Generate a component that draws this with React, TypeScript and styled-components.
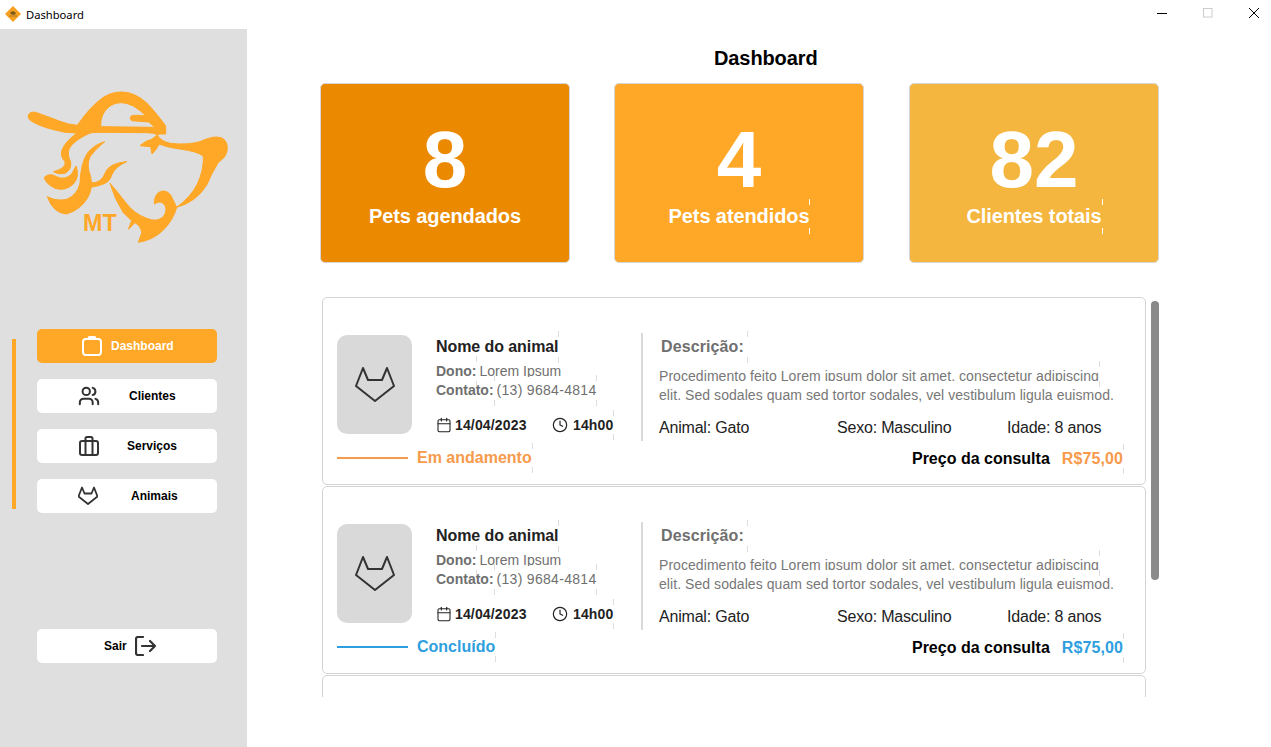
import React from "react";
import styled, { createGlobalStyle } from "styled-components";
import { Calendar, Clock, Users } from "lucide-react";

const ORANGE = "#ffa726";

const GlobalStyle = createGlobalStyle`
  html, body {
    margin: 0;
    height: 100%;
    overflow: hidden;
    background: #fff;
  }
  body {
    font-family: "Liberation Sans", Arial, sans-serif;
  }
  * {
    box-sizing: border-box;
  }
`;

const Window = styled.div`
  width: 1271px;
  height: 747px;
  display: flex;
  flex-direction: column;
  overflow: hidden;
`;

const TitleBar = styled.div`
  height: 29px;
  flex: none;
  display: flex;
  align-items: center;
  padding: 0 12px 1px 5px;
  background: #fff;
`;

const TitleText = styled.span`
  margin-left: 5px;
  font-family: "Noto Sans", sans-serif;
  font-size: 11.2px;
  color: #000;
`;

const WindowControls = styled.div`
  margin-left: auto;
  display: flex;
  align-items: center;
  gap: 36px;
  padding-bottom: 3px;
`;

const Body = styled.div`
  flex: 1;
  display: flex;
  min-height: 0;
`;

const Sidebar = styled.aside`
  width: 247px;
  flex: none;
  display: flex;
  flex-direction: column;
  padding: 60px 0 0 12px;
  background: #dfdfdf;
`;

const Logo = styled.svg`
  display: block;
  width: 204px;
  height: 156px;
  margin-left: 14px;
`;

const NavArea = styled.nav`
  display: flex;
  align-items: flex-start;
  margin-top: 84px;
`;

const NavIndicator = styled.div`
  width: 4px;
  height: 170px;
  margin: 10px 21px 0 0;
  background: ${ORANGE};
`;

const NavList = styled.div`
  display: flex;
  flex-direction: column;
  gap: 16px;
`;

const NavButton = styled.button<{ $active?: boolean; $left: number; $gap: number }>`
  width: 180px;
  height: 34px;
  display: flex;
  align-items: center;
  gap: ${(p) => p.$gap}px;
  padding: 0 0 0 ${(p) => p.$left}px;
  border: none;
  border-radius: 5px;
  background: ${(p) => (p.$active ? ORANGE : "#fff")};
  color: ${(p) => (p.$active ? "#fff" : "#000")};
  font-family: inherit;
  font-size: 12px;
  font-weight: 700;
`;

const LogoutButton = styled(NavButton)`
  margin: 116px 0 0 25px;
`;

const Main = styled.main`
  flex: 1;
  min-width: 0;
  padding: 18px 0 0 73px;
`;

const PageTitle = styled.h1`
  margin: 0 0 13px 394px;
  font-size: 20px;
  line-height: 23px;
  font-weight: 700;
  letter-spacing: -0.1px;
  color: #000;
`;

const StatsRow = styled.section`
  width: 839px;
  display: flex;
  gap: 44px;
`;

const StatCard = styled.div<{ $bg: string }>`
  width: 250px;
  height: 180px;
  display: flex;
  flex-direction: column;
  align-items: center;
  padding-top: 30px;
  border: 1px solid #d6d6d6;
  border-radius: 5px;
  background: ${(p) => p.$bg};
  color: #fff;

  &:last-child {
    margin-left: auto;
  }
`;

const StatNumber = styled.div`
  font-size: 80px;
  line-height: 92px;
  font-weight: 700;
`;

const Ticked = styled.span<{ $tick?: string }>`
  position: relative;
  display: block;
  &::after {
    content: "";
    position: absolute;
    right: -1px;
    top: -6px;
    bottom: -6px;
    width: 1px;
    background: linear-gradient(
      ${(p) => p.$tick ?? "#ddd"} 6px,
      transparent 6px,
      transparent calc(100% - 6px),
      ${(p) => p.$tick ?? "#ddd"} calc(100% - 6px)
    );
  }
`;

const StatLabel = styled(Ticked)`
  margin-top: -1px;
  font-size: 20px;
  line-height: 23px;
  font-weight: 700;
  letter-spacing: -0.1px;
`;

const ListArea = styled.section`
  height: 400px;
  width: 839px;
  margin-top: 34px;
  padding-left: 2px;
  display: flex;
  gap: 5px;
  overflow: hidden;
`;

const CardList = styled.div`
  width: 824px;
  flex: none;
  display: flex;
  flex-direction: column;
  gap: 1px;
`;

const ScrollThumb = styled.div`
  width: 8px;
  height: 279px;
  margin-top: 4px;
  border-radius: 4px;
  background: #8a8a8a;
`;

const Card = styled.article`
  height: 188px;
  flex: none;
  padding: 35px 22px 0 14px;
  border: 1px solid #d4d4d4;
  border-radius: 5px;
  background: #fff;
`;

const CardTop = styled.div`
  height: 108px;
  display: flex;
`;

const Avatar = styled.div`
  width: 75px;
  height: 99px;
  flex: none;
  margin-top: 2px;
  display: flex;
  align-items: center;
  justify-content: center;
  border-radius: 10px;
  background: #d9d9d9;
`;

const Info = styled.div`
  width: 205px;
  flex: none;
  margin-left: 24px;
  padding-top: 4px;
`;

const PetName = styled(Ticked)`
  width: fit-content;
  font-size: 16px;
  line-height: 20px;
  font-weight: 700;
  letter-spacing: -0.08px;
  color: #222;
`;

const InfoRow = styled.div<{ $top: number }>`
  height: 19px;
  margin-top: ${(p) => p.$top}px;
  display: flex;
  font-size: 14px;
  line-height: 19px;
  color: #6f6f6f;
`;

const InfoLabel = styled(Ticked)`
  font-weight: 700;
  margin-right: 3px;
`;

const ClippedValue = styled.span`
  display: block;
  height: 15px;
  overflow: hidden;
`;

const PhoneValue = styled(Ticked)`
  letter-spacing: 0.3px;
`;

const Schedule = styled.div`
  margin-top: 16px;
  display: flex;
  align-items: center;
  font-size: 14px;
  line-height: 18px;
  font-weight: 700;
  letter-spacing: 0.15px;
  color: #222;
`;

const ScheduleItem = styled.div<{ $gap: number; $width: number }>`
  width: ${(p) => p.$width}px;
  flex: none;
  display: flex;
  align-items: center;
  gap: ${(p) => p.$gap}px;
`;

const Divider = styled.div`
  width: 2px;
  height: 108px;
  flex: none;
  background: #d9d9d9;
`;

const Details = styled.div`
  flex: 1;
  min-width: 0;
  padding: 4px 0 0 16px;
`;

const DescTitle = styled(Ticked)`
  width: fit-content;
  margin-left: 2px;
  padding-right: 3px;
  font-size: 16px;
  line-height: 20px;
  font-weight: 700;
  letter-spacing: 0.1px;
  color: #6f6f6f;
`;

const DescText = styled.div`
  margin-top: 10px;
  font-size: 14px;
  line-height: 19px;
  letter-spacing: 0.06px;
  color: #777;
`;

const DescFirstLine = styled(Ticked)`
  width: fit-content;
  white-space: nowrap;
`;

const DescClip = styled.span`
  display: block;
  height: 14px;
  margin-bottom: 5px;
  overflow: hidden;
`;

const FactsRow = styled.div`
  margin-top: 14px;
  display: flex;
  font-size: 16px;
  line-height: 18px;
  letter-spacing: -0.2px;
  color: #222;
`;

const Fact = styled.span<{ $width?: number }>`
  width: ${(p) => (p.$width ? `${p.$width}px` : "auto")};
  flex: none;
`;

const CardBottom = styled.div`
  height: 24px;
  margin-top: 5px;
  display: flex;
  align-items: center;
`;

const StatusLine = styled.div<{ $color: string }>`
  width: 71px;
  height: 2px;
  flex: none;
  background: ${(p) => p.$color};
`;

const StatusText = styled(Ticked)<{ $color: string }>`
  margin-left: 9px;
  font-size: 16px;
  line-height: 18px;
  font-weight: 700;
  color: ${(p) => p.$color};
`;

const PriceLabel = styled.span`
  margin: 2px 0 0 auto;
  font-size: 16px;
  line-height: 18px;
  font-weight: 700;
  color: #000;
`;

const PriceValue = styled(Ticked)<{ $color: string }>`
  margin: 2px 0 0 12px;
  font-size: 16px;
  line-height: 18px;
  font-weight: 700;
  letter-spacing: 0.1px;
  color: ${(p) => p.$color};
`;

const CatIcon = ({ size, width = 2 }: { size: number; width?: number }) => (
  <svg width={size} height={size} viewBox="0 0 40 40" fill="none" stroke="#333" strokeWidth={width} strokeLinejoin="round">
    <path d="M1 21 L8 3 L13 15 H27 L32 3 L39 21 L20 36 Z" />
  </svg>
);

const ClipboardIcon = () => (
  <svg width="20" height="20" viewBox="0 0 20 20" fill="none" stroke="#fff" strokeWidth="2">
    <rect x="1" y="3" width="18" height="16" rx="3" />
    <path d="M6.5 3 V2.2 Q6.5 1 7.7 1 H12.3 Q13.5 1 13.5 2.2 V3" />
  </svg>
);

const BriefcaseIcon = () => (
  <svg width="20" height="20" viewBox="0 0 20 20" fill="none" stroke="#333" strokeWidth="2">
    <rect x="1" y="5" width="18" height="14" rx="2" />
    <path d="M6.5 5 V2.5 Q6.5 1 8 1 H12 Q13.5 1 13.5 2.5 V5 M6.5 5 V19 M13.5 5 V19" />
  </svg>
);

const LogoutIcon = () => (
  <svg width="22" height="20" viewBox="0 0 22 20" fill="none" stroke="#333" strokeWidth="2.2" strokeLinecap="round" strokeLinejoin="round">
    <path d="M8 1 H3 Q1 1 1 3 V17 Q1 19 3 19 H8 M7 10 H20 M15 5 L20 10 L15 15" />
  </svg>
);

const AppGlyph = () => (
  <svg width="16" height="16" viewBox="0 0 16 16">
    <path d="M8 0 L16 8 L8 16 L0 8 Z" fill="#f7a01f" />
    <path d="M5 7 Q7 4 10 6 L11 8 L8 9 L6 8 Z" fill="#7a5a20" />
    <path d="M4 10 H12" stroke="#a8782a" strokeWidth="1" />
  </svg>
);

const LOGO_PATHS = [
  "M85 345 Q92 332 110 338 Q150 352 180 364 Q205 374 232 376 Q270 320 310 292 Q345 270 385 278 Q425 288 455 325 Q485 360 497 378 L497 402 L480 402 L472 404 Q462 398 440 398 L300 397 L240 400 Q190 400 145 385 Q105 372 90 360 Q82 352 85 345 Z M302 380 Q300 340 330 318 Q360 298 400 318 Q420 330 438 348 Q410 344 395 347 Q386 353 395 362 L446 366 L465 382 Z",
  "M232 398 Q195 425 186 450 Q180 470 195 485 Q200 505 160 515 Q175 525 195 520 Q215 510 212 485 Q200 465 208 445 Q222 420 272 398 Z",
  "M135 530 Q150 518 170 530 Q195 542 215 522 L228 498 Q240 530 220 552 Q195 575 165 565 Q135 550 133 532 Z",
  "M142 590 Q170 605 200 598 Q232 585 240 550 Q242 490 262 460 Q280 435 314 425 Q285 448 270 470 Q258 495 272 530 Q280 565 262 595 Q240 630 200 642 Q160 640 142 590 Z",
  "M270 549 Q305 550 315 520 Q325 490 380 485 Q345 500 335 525 Q330 545 310 552 Q290 560 270 562 Z",
  "M420 437 Q440 420 455 418 L472 405 Q480 422 510 430 Q560 436 600 425 Q630 411 650 411 Q682 412 682 445 Q682 470 655 487 Q635 520 620 555 Q590 605 530 622 Q572 592 592 552 Q612 510 610 468 Q590 454 545 448 Q500 442 478 432 L468 448 L456 462 L452 440 Z",
  "M330 550 Q352 575 375 605 Q400 640 440 655 Q470 668 490 650 Q505 630 492 612 Q480 600 463 612 Q462 590 475 578 Q495 565 512 585 L530 622 Q520 660 490 690 Q460 720 415 727 L425 700 Q425 680 405 668 L385 688 L395 662 L370 638 Q345 600 330 550 Z",
];

const stats = [
  { value: "8", label: "Pets agendados", bg: "#eb8a00", tick: "transparent" },
  { value: "4", label: "Pets atendidos", bg: ORANGE, tick: "#fff" },
  { value: "82", label: "Clientes totais", bg: "#f5b63f", tick: "#fff" },
];

const appointments = [
  { status: "Em andamento", color: "#f79a4b" },
  { status: "Concluído", color: "#2f9fe0" },
];

function AppointmentCard({ status, color }: { status: string; color: string }) {
  return (
    <Card>
      <CardTop>
        <Avatar>
          <CatIcon size={40} />
        </Avatar>
        <Info>
          <PetName>Nome do animal</PetName>
          <InfoRow $top={5}>
            <InfoLabel>Dono:</InfoLabel>
            <ClippedValue>Lorem Ipsum</ClippedValue>
          </InfoRow>
          <InfoRow $top={0}>
            <InfoLabel>Contato:</InfoLabel>
            <PhoneValue>(13) 9684-4814</PhoneValue>
          </InfoRow>
          <Schedule>
            <ScheduleItem $gap={3} $width={116}>
              <Calendar size={16} strokeWidth={1.6} color="#222" />
              14/04/2023
            </ScheduleItem>
            <ScheduleItem $gap={5} $width={64}>
              <Clock size={16} strokeWidth={1.8} color="#222" />
              <Ticked>14h00</Ticked>
            </ScheduleItem>
          </Schedule>
        </Info>
        <Divider />
        <Details>
          <DescTitle>Descrição:</DescTitle>
          <DescText>
            <DescFirstLine>
              <DescClip>Procedimento feito Lorem ipsum dolor sit amet, consectetur adipiscing</DescClip>
            </DescFirstLine>
            elit. Sed sodales quam sed tortor sodales, vel vestibulum ligula euismod.
          </DescText>
          <FactsRow>
            <Fact $width={178}>Animal: Gato</Fact>
            <Fact $width={170}>Sexo: Masculino</Fact>
            <Fact>Idade: 8 anos</Fact>
          </FactsRow>
        </Details>
      </CardTop>
      <CardBottom>
        <StatusLine $color={color} />
        <StatusText $color={color}>{status}</StatusText>
        <PriceLabel>Preço da consulta</PriceLabel>
        <PriceValue $color={color}>R$75,00</PriceValue>
      </CardBottom>
    </Card>
  );
}

export default function App() {
  return (
    <>
      <GlobalStyle />
      <Window>
        <TitleBar>
          <AppGlyph />
          <TitleText>Dashboard</TitleText>
          <WindowControls>
            <svg width="10" height="10" viewBox="0 0 10 10" stroke="#000" strokeWidth="1"><path d="M0 5.5 H10" /></svg>
            <svg width="10" height="10" viewBox="0 0 10 10" fill="none" stroke="#ccc" strokeWidth="1"><rect x="0.5" y="0.5" width="8.5" height="8.5" /></svg>
            <svg width="10" height="10" viewBox="0 0 10 10" stroke="#000" strokeWidth="1"><path d="M0 0 L10 10 M10 0 L0 10" /></svg>
          </WindowControls>
        </TitleBar>
        <Body>
          <Sidebar>
            <Logo viewBox="78 267 612 468">
              {LOGO_PATHS.map((d) => (
                <path key={d} d={d} fill={ORANGE} fillRule="evenodd" stroke={ORANGE} strokeWidth="3" strokeLinejoin="round" />
              ))}
              <text x="249" y="692" fontFamily="Liberation Sans, sans-serif" fontSize="70" fontWeight="700" fill={ORANGE}>MT</text>
            </Logo>
            <NavArea>
              <NavIndicator />
              <NavList>
                <NavButton $active $left={45} $gap={9}>
                  <ClipboardIcon />
                  Dashboard
                </NavButton>
                <NavButton $left={41} $gap={29}>
                  <Users size={22} strokeWidth={2.2} color="#333" />
                  Clientes
                </NavButton>
                <NavButton $left={42} $gap={28}>
                  <BriefcaseIcon />
                  Serviços
                </NavButton>
                <NavButton $left={41} $gap={33}>
                  <CatIcon size={20} width={3.6} />
                  Animais
                </NavButton>
              </NavList>
            </NavArea>
            <LogoutButton $left={67} $gap={8}>
              Sair
              <LogoutIcon />
            </LogoutButton>
          </Sidebar>
          <Main>
            <PageTitle>Dashboard</PageTitle>
            <StatsRow>
              {stats.map((s) => (
                <StatCard key={s.label} $bg={s.bg}>
                  <StatNumber>{s.value}</StatNumber>
                  <StatLabel $tick={s.tick}>{s.label}</StatLabel>
                </StatCard>
              ))}
            </StatsRow>
            <ListArea>
              <CardList>
                {appointments.map((a) => (
                  <AppointmentCard key={a.status} status={a.status} color={a.color} />
                ))}
                <Card />
              </CardList>
              <ScrollThumb />
            </ListArea>
          </Main>
        </Body>
      </Window>
    </>
  );
}
